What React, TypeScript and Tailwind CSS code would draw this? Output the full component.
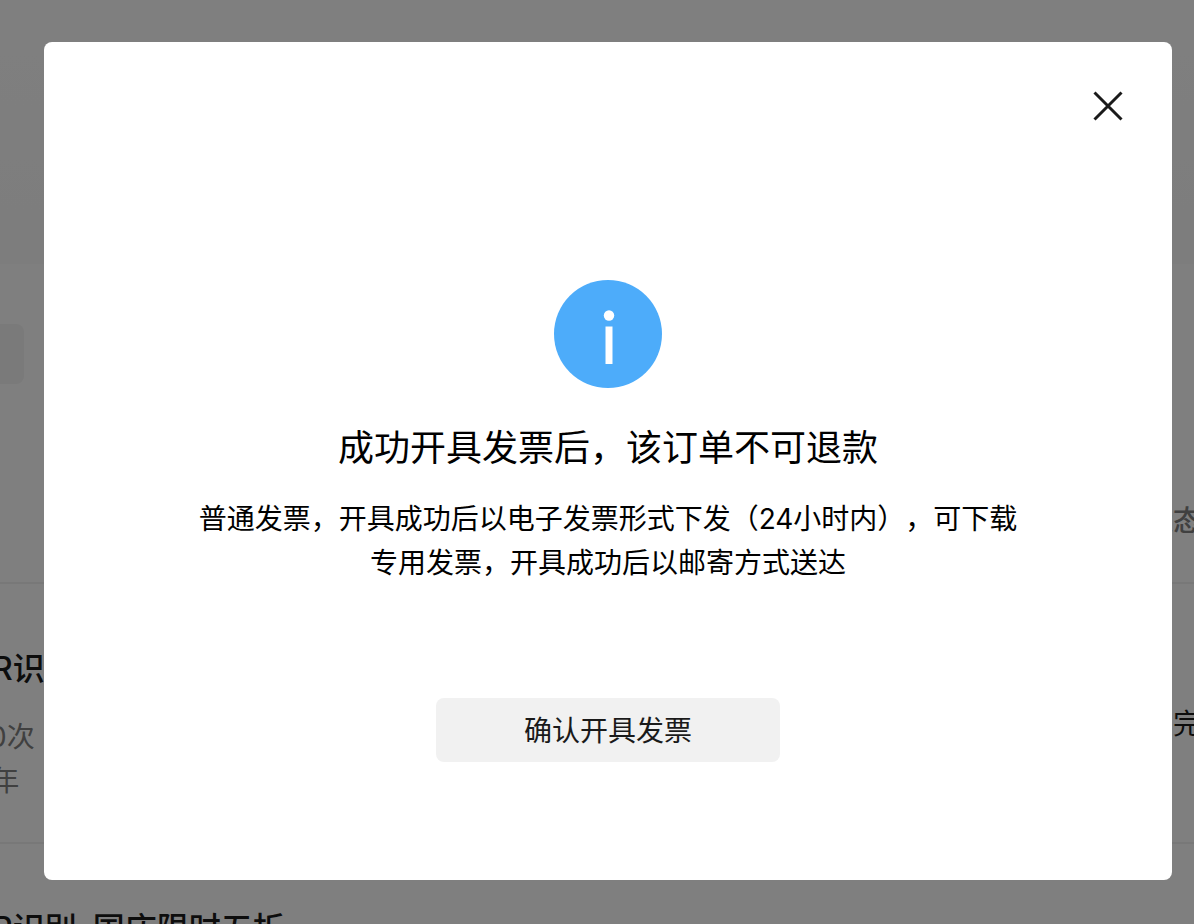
const orders = [
  { name: "OCR识别", amount: "共20次", term: "满 1年", status: "已完成" },
  { name: "OCR识别–国庆限时五折", amount: "共20次", term: "满 1年", status: "已完成" },
];

function OrdersPage() {
  return (
    <main aria-hidden="true" className="h-screen overflow-hidden bg-white">
      <header className="h-66 bg-linear-to-b from-white to-[#fafafa]" />
      <div className="-ml-14 pt-15">
        <div className="h-15 w-20 rounded-lg bg-[#f4f4f4]" />
        <table className="mt-[75px] w-full table-fixed text-left text-[28px] leading-11">
          <thead>
            <tr className="h-[124px] text-[#808080]">
              <td />
              <th className="w-[49px] font-medium whitespace-nowrap">状态</th>
            </tr>
          </thead>
          <tbody>
            {orders.map((order) => (
              <tr key={order.name} className="h-[260px] border-t-2 border-[#f0f0f0] align-top">
                <td className="pt-[63px]">
                  <h2 className="mb-6 text-[32px] font-medium text-[#1a1a1a]">{order.name}</h2>
                  <p className="text-[#808080]">{order.amount}</p>
                  <p className="text-[#808080]">{order.term}</p>
                </td>
                <td className="pt-[118px] whitespace-nowrap text-[#1a1a1a]">{order.status}</td>
              </tr>
            ))}
          </tbody>
        </table>
      </div>
    </main>
  );
}

function InvoiceDialog() {
  return (
    <div className="fixed inset-0 flex items-start overflow-hidden bg-black/50 pt-[42px] pr-[22px] pl-11">
      <section
        role="dialog"
        aria-modal="true"
        aria-labelledby="invoice-title"
        className="flex flex-1 flex-col items-center rounded-lg bg-white px-12 pt-12 pb-[118px] text-center text-black"
      >
        <button type="button" aria-label="关闭" className="self-end">
          <svg viewBox="0 0 32 32" className="size-8" fill="none" stroke="#1a1a1a" strokeWidth="3">
            <path d="M2.5 2.5 29.5 29.5M29.5 2.5 2.5 29.5" />
          </svg>
        </button>
        <svg viewBox="0 0 108 108" className="mt-[158px] size-27" aria-hidden="true">
          <circle cx="54" cy="54" r="54" fill="#4dacfa" />
          <circle cx="55" cy="35.5" r="5.2" fill="#fff" />
          <path d="M51.5 46.5h7V84h-7z" fill="#fff" />
        </svg>
        <h1 id="invoice-title" className="mt-8 text-4xl leading-14">
          成功开具发票后，该订单不可退款
        </h1>
        <p className="mt-[21px] text-[28px] leading-11">
          普通发票，开具成功后以电子发票形式下发（24小时内），可下载
          <br />
          专用发票，开具成功后以邮寄方式送达
        </p>
        <button
          type="button"
          className="mt-[113px] h-16 w-[344px] rounded-lg bg-[#f1f1f1] pt-0.5 text-[28px] text-[#1a1a1a]"
        >
          确认开具发票
        </button>
      </section>
    </div>
  );
}

export default function App() {
  return (
    <div
      lang="zh-CN"
      className="font-['Inter','Noto_Sans_CJK_SC',sans-serif] [text-spacing-trim:space-all]"
    >
      <OrdersPage />
      <InvoiceDialog />
    </div>
  );
}
